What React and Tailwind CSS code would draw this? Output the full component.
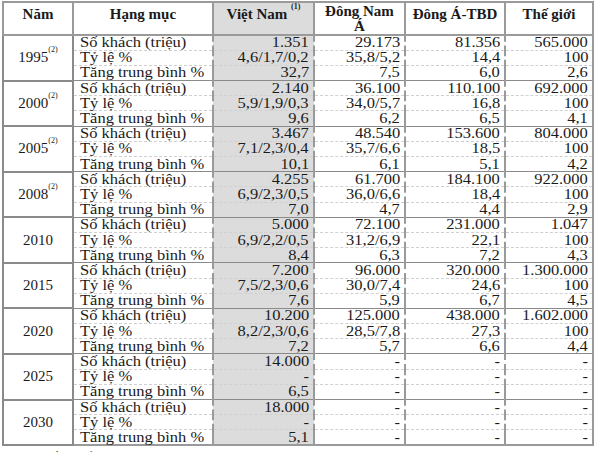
import React from "react";

const groups = [
  { y: "1995", sup: true, vn: ["1.351", "4,6/1,7/0,2", "32,7"], dna: ["29.173", "35,8/5,2", "7,5"], da: ["81.356", "14,4", "6,0"], tg: ["565.000", "100", "2,6"] },
  { y: "2000", sup: true, vn: ["2.140", "5,9/1,9/0,3", "9,6"], dna: ["36.100", "34,0/5,7", "6,2"], da: ["110.100", "16,8", "6,5"], tg: ["692.000", "100", "4,1"] },
  { y: "2005", sup: true, vn: ["3.467", "7,1/2,3/0,4", "10,1"], dna: ["48.540", "35,7/6,6", "6,1"], da: ["153.600", "18,5", "5,1"], tg: ["804.000", "100", "4,2"] },
  { y: "2008", sup: true, vn: ["4.255", "6,9/2,3/0,5", "7,0"], dna: ["61.700", "36,0/6,6", "4,7"], da: ["184.100", "18,4", "4,4"], tg: ["922.000", "100", "2,9"] },
  { y: "2010", vn: ["5.000", "6,9/2,2/0,5", "8,4"], dna: ["72.100", "31,2/6,9", "6,3"], da: ["231.000", "22,1", "7,2"], tg: ["1.047", "100", "4,3"] },
  { y: "2015", vn: ["7.200", "7,5/2,3/0,6", "7,6"], dna: ["96.000", "30,0/7,4", "5,9"], da: ["320.000", "24,6", "6,7"], tg: ["1.300.000", "100", "4,5"] },
  { y: "2020", vn: ["10.200", "8,2/2,3/0,6", "7,2"], dna: ["125.000", "28,5/7,8", "5,7"], da: ["438.000", "27,3", "6,6"], tg: ["1.602.000", "100", "4,4"] },
  { y: "2025", vn: ["14.000", "-", "6,5"], dna: ["-", "-", "-"], da: ["-", "-", "-"], tg: ["-", "-", "-"] },
  { y: "2030", vn: ["18.000", "-", "5,1"], dna: ["-", "-", "-"], da: ["-", "-", "-"], tg: ["-", "-", "-"] },
];

const labels = ["Số khách (triệu)", "Tỷ lệ %", "Tăng trung bình %"];

export default function App() {
  return (
    <div className="w-[599px] h-[452px] overflow-hidden bg-white text-[#1a1a1a]" style={{ fontFamily: '"Liberation Serif", "Times New Roman", serif' }}>
      <div className="pt-px pl-[2px]">
        <table className="table-fixed border-collapse border-2 border-[#9a9a9a] text-[15px] leading-[13px]">
          <colgroup>
            <col className="w-[70px]" />
            <col className="w-[140px]" />
            <col className="w-[101px]" />
            <col className="w-[91px]" />
            <col className="w-[100px]" />
            <col className="w-[88px]" />
          </colgroup>
          <thead>
            <tr className="h-[30px]">
              <th className="border-2 border-[#9a9a9a] align-top pt-[5px] font-bold">Năm</th>
              <th className="border-2 border-[#9a9a9a] align-top pt-[5px] font-bold">Hạng mục</th>
              <th className="border-2 border-[#9a9a9a] align-top pt-[5px] font-bold bg-[#dcdcdc]">
                Việt Nam <sup className="text-[8px] align-[6px]">(1)</sup>
              </th>
              <th className="border-2 border-[#9a9a9a] align-top pt-[1px] font-bold leading-[15px]">
                Đông Nam
                <br />Á
              </th>
              <th className="border-2 border-[#9a9a9a] align-top pt-[5px] font-bold">Đông Á-TBD</th>
              <th className="border-2 border-[#9a9a9a] align-top pt-[5px] font-bold">Thế giới</th>
            </tr>
          </thead>
          <tbody>
            {groups.map((g) =>
              [0, 1, 2].map((i) => {
                const rowBorder = i === 2 ? "border-b border-b-[#8a8a8a]" : "border-b border-b-[#d0d0d0] border-dashed";
                const num = `border-x-2 border-x-[#9a9a9a] ${rowBorder} text-right pr-[4px]`;
                return (
                  <tr key={g.y + i} className="h-[15.2px]">
                    {i === 0 && (
                      <td rowSpan={3} className="border-2 border-[#8a8a8a] text-center align-middle">
                        {g.y}
                        {g.sup && <sup className="text-[8px] align-[6px]">(2)</sup>}
                      </td>
                    )}
                    <td className={`border-x-2 border-x-[#9a9a9a] ${rowBorder} pl-[6px]`}>
                      <span className="inline-block scale-x-110 origin-left">{labels[i]}</span>
                    </td>
                    <td className={`${num} bg-[#dcdcdc]`}>
                      <span className="inline-block scale-x-110 origin-right">{g.vn[i]}</span>
                    </td>
                    <td className={num}>
                      <span className="inline-block scale-x-110 origin-right">{g.dna[i]}</span>
                    </td>
                    <td className={num}>
                      <span className="inline-block scale-x-110 origin-right">{g.da[i]}</span>
                    </td>
                    <td className={num}>
                      <span className="inline-block scale-x-110 origin-right">{g.tg[i]}</span>
                    </td>
                  </tr>
                );
              })
            )}
          </tbody>
        </table>
        <div className="pl-[30px] pt-[5px] text-[14px] leading-none">Nguồn: Tổng cục Du lịch</div>
      </div>
    </div>
  );
}
